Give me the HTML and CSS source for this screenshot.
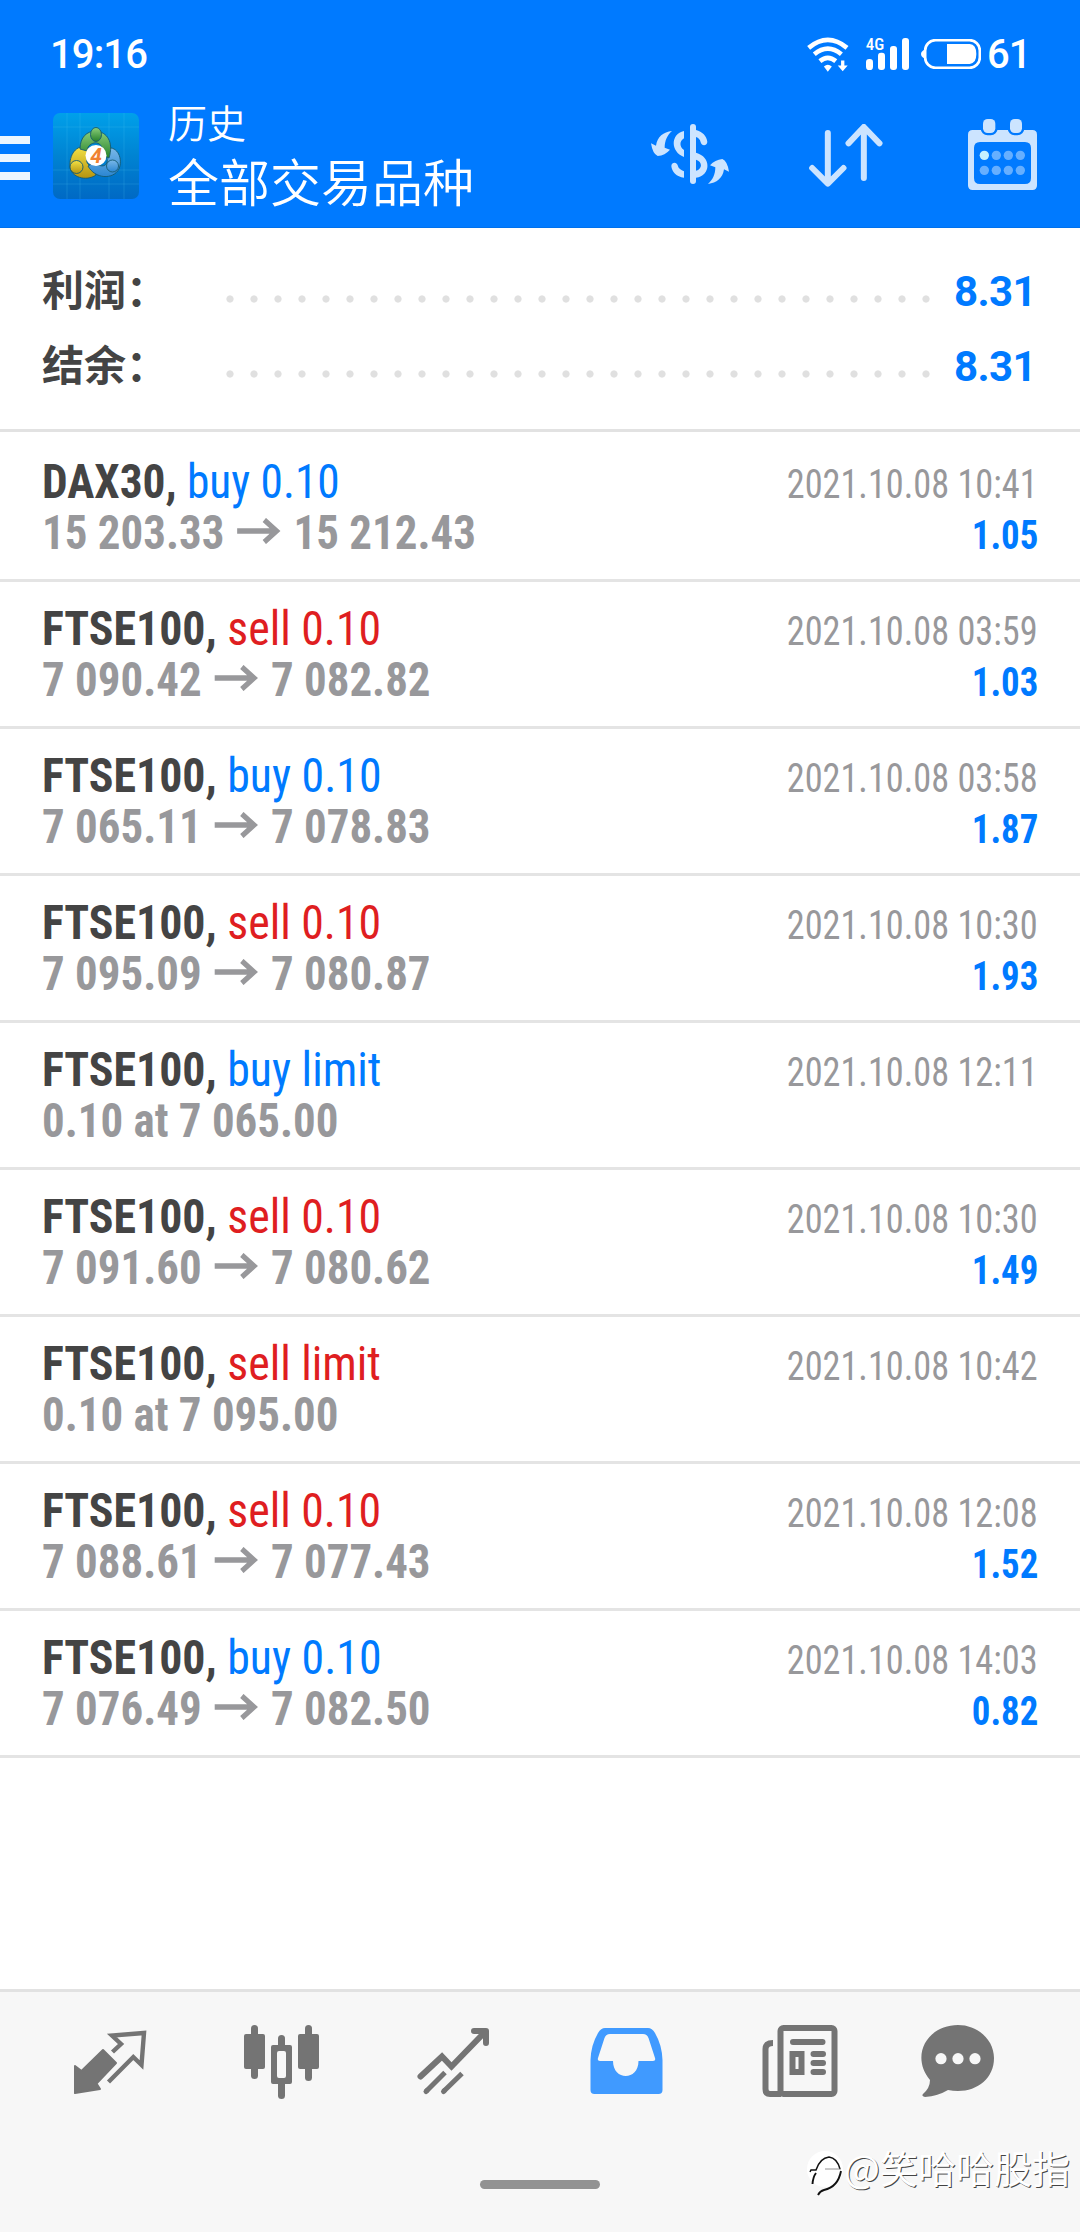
FILE: index.html
```html
<!DOCTYPE html>
<html lang="zh-CN">
<head>
<meta charset="utf-8">
<title>历史</title>
<link rel="stylesheet" href="styles.css">
</head>
<body>
<header class="header">
  <div class="status">
    <span class="clock">19:16</span>
    <div class="status-icons">
      <svg class="wifi" viewBox="558 110 127 104">
        <g fill="none" stroke="#fff" stroke-width="14"><path d="M563 142Q621 94 679 142"/><path d="M580 161Q621 127 662 161"/><path d="M597 182Q621 162 645 182"/></g>
        <path fill="#fff" d="M609 198Q621 188 633 198L621 214Z"/>
        <path fill="#fff" d="M661 180h10v15h10l-15 18-15-18h10z"/>
      </svg>
      <svg class="signal" viewBox="735 111 129 99">
        <g fill="#fff"><rect x="735" y="177" width="21" height="33" rx="10"/><rect x="771" y="158" width="21" height="52" rx="9"/><rect x="807" y="138" width="21" height="72" rx="9"/><rect x="843" y="114" width="21" height="96" rx="9"/></g>
        <text class="net" x="734" y="150">4G</text>
      </svg>
      <svg class="battery" viewBox="900 117 180 90">
        <rect x="912.500" y="120.500" width="164" height="83" rx="31" fill="none" stroke="#fff" stroke-width="8"/>
        <path fill="#fff" d="M910 149Q900 154 900 162Q900 170 910 175Z"/>
        <path fill="#fff" d="M978 132H1046Q1066 134 1066 162Q1066 190 1046 192H978Z"/>
      </svg>
      <span class="percent">61</span>
    </div>
  </div>
  <div class="bar">
    <div class="menu"><i></i><i></i><i></i></div>
    <svg class="logo" viewBox="0 0 86 86">
      <defs>
        <linearGradient id="bg" x1="0" y1="0" x2="0" y2="1"><stop offset="0" stop-color="#00a0ea"/><stop offset=".5" stop-color="#0083d2"/><stop offset="1" stop-color="#0069c4"/></linearGradient>
        <linearGradient id="gr" x1="0" y1="0" x2="0" y2="1"><stop offset="0" stop-color="#8ccf7b"/><stop offset="1" stop-color="#26812b"/></linearGradient>
        <linearGradient id="ye" x1="0" y1="0" x2="0" y2="1"><stop offset="0" stop-color="#f3e145"/><stop offset="1" stop-color="#b59410"/></linearGradient>
        <linearGradient id="bl" x1="0" y1="0" x2="0" y2="1"><stop offset="0" stop-color="#7ab8e8"/><stop offset="1" stop-color="#2b86d2"/></linearGradient>
      </defs>
      <rect width="86" height="86" rx="7" fill="url(#bg)"/>
      <path d="M0 14H86M0 57H86M0 71H86M14 0V86M27 0V86M56 0V86M71 0V86" stroke="#55c8f0" stroke-opacity=".2"/>
      <g stroke="#155a70" stroke-width=".9">
        <path fill="url(#ye)" d="M35 34C23 31 16 42 17 54C18 64 33 69 43 62L40 53C34 53 31 47 37 41Z"/>
        <path fill="url(#bl)" d="M54 35C65 33 70 46 66 56C60 67 42 66 35 53L42 49C48 56 56 53 54 45Z"/>
        <path fill="url(#gr)" d="M27 36C27 24 34 18 43 18C54 19 61 29 56 45L48 42C51 34 47 29 41 30C37 31 34 34 34 38Z"/>
        <ellipse cx="43" cy="21.500" rx="5.500" ry="7" fill="url(#gr)"/>
        <circle cx="23.500" cy="54" r="6.500" fill="url(#ye)"/>
        <circle cx="59.500" cy="53" r="6" fill="url(#bl)"/>
      </g>
      <circle cx="43" cy="42.500" r="10.500" fill="#fff"/>
      <text class="four" x="43" y="49.500" text-anchor="middle">4</text>
    </svg>
    <div class="titles"><div class="title">历史</div><div class="subtitle">全部交易品种</div></div>
    <svg class="currency" viewBox="93 372 234 180" fill="#cce4ff">
      <path d="M156 393C130 396 112 410 108 437L93 430Q98 462 113 468Q135 466 150 449L134 443C134 422 142 405 156 393Z"/>
      <path d="M264 552C290 549 308 535 312 508L327 515Q322 483 307 477Q285 479 270 496L286 502C286 523 278 540 264 552Z"/>
      <rect x="210" y="372" width="18" height="180" rx="9"/>
      <path d="M192 393C151 402 151 455 192 471V450C178 441 178 423 192 415ZM192 533C170 531 155 515 154 498C155 486 170 485 173 496C175 506 183 511 192 514ZM228 390C247 395 260 408 262 426C260 439 245 439 242 427C240 418 236 414 228 411ZM228 458C274 470 274 526 228 533V512C248 507 248 485 228 479Z"/>
    </svg>
    <svg class="sort" viewBox="568 372 221 189" fill="none" stroke="#cce4ff" stroke-width="18" stroke-linecap="round" stroke-linejoin="round">
      <path d="M624 399V549M577 504L624 551L671 504M732 534V383M686 430L732 381L779 430"/>
    </svg>
    <svg class="calendar" viewBox="1044 357 207 213">
      <path fill="#cce4ff" fill-rule="evenodd" d="M1058 390H1237Q1251 390 1251 404V556Q1251 570 1237 570H1058Q1044 570 1044 556V404Q1044 390 1058 390ZM1080 426Q1062 426 1062 444V534Q1062 552 1080 552H1215Q1233 552 1233 534V444Q1233 426 1215 426Z"/>
      <g fill="#cce4ff" stroke="#007aff" stroke-width="14" paint-order="stroke"><rect x="1089" y="357" width="37" height="42" rx="14"/><rect x="1170" y="357" width="36" height="42" rx="14"/></g>
      <g fill="#66afff"><circle cx="1093" cy="466" r="14" fill="#c4f0ff"/><circle cx="1129" cy="466" r="14"/><circle cx="1165" cy="466" r="14"/><circle cx="1201" cy="466" r="14"/><circle cx="1093" cy="511" r="14"/><circle cx="1129" cy="511" r="14"/><circle cx="1165" cy="511" r="14"/><circle cx="1201" cy="511" r="14"/></g>
    </svg>
  </div>
</header>

<section class="summary">
  <div class="sum-row"><span class="sum-label">利润：</span><span class="dots"></span><span class="sum-value">8.31</span></div>
  <div class="sum-row"><span class="sum-label">结余：</span><span class="dots"></span><span class="sum-value">8.31</span></div>
</section>

<main class="list">
  <article class="deal"><div class="line"><span class="name"><b>DAX30,</b> <span class="buy">buy 0.10</span></span><time>2021.10.08 10:41</time></div><div class="line price"><span class="range">15 203.33<svg class="arrow" viewBox="0 0 46 26"><path d="M0 13H42M29 2L42 13L29 24"/></svg>15 212.43</span><span class="profit">1.05</span></div></article>
  <article class="deal"><div class="line"><span class="name"><b>FTSE100,</b> <span class="sell">sell 0.10</span></span><time>2021.10.08 03:59</time></div><div class="line price"><span class="range">7 090.42<svg class="arrow" viewBox="0 0 46 26"><path d="M0 13H42M29 2L42 13L29 24"/></svg>7 082.82</span><span class="profit">1.03</span></div></article>
  <article class="deal"><div class="line"><span class="name"><b>FTSE100,</b> <span class="buy">buy 0.10</span></span><time>2021.10.08 03:58</time></div><div class="line price"><span class="range">7 065.11<svg class="arrow" viewBox="0 0 46 26"><path d="M0 13H42M29 2L42 13L29 24"/></svg>7 078.83</span><span class="profit">1.87</span></div></article>
  <article class="deal"><div class="line"><span class="name"><b>FTSE100,</b> <span class="sell">sell 0.10</span></span><time>2021.10.08 10:30</time></div><div class="line price"><span class="range">7 095.09<svg class="arrow" viewBox="0 0 46 26"><path d="M0 13H42M29 2L42 13L29 24"/></svg>7 080.87</span><span class="profit">1.93</span></div></article>
  <article class="deal"><div class="line"><span class="name"><b>FTSE100,</b> <span class="buy">buy limit</span></span><time>2021.10.08 12:11</time></div><div class="line price"><span class="range">0.10 at 7 065.00</span></div></article>
  <article class="deal"><div class="line"><span class="name"><b>FTSE100,</b> <span class="sell">sell 0.10</span></span><time>2021.10.08 10:30</time></div><div class="line price"><span class="range">7 091.60<svg class="arrow" viewBox="0 0 46 26"><path d="M0 13H42M29 2L42 13L29 24"/></svg>7 080.62</span><span class="profit">1.49</span></div></article>
  <article class="deal"><div class="line"><span class="name"><b>FTSE100,</b> <span class="sell">sell limit</span></span><time>2021.10.08 10:42</time></div><div class="line price"><span class="range">0.10 at 7 095.00</span></div></article>
  <article class="deal"><div class="line"><span class="name"><b>FTSE100,</b> <span class="sell">sell 0.10</span></span><time>2021.10.08 12:08</time></div><div class="line price"><span class="range">7 088.61<svg class="arrow" viewBox="0 0 46 26"><path d="M0 13H42M29 2L42 13L29 24"/></svg>7 077.43</span><span class="profit">1.52</span></div></article>
  <article class="deal"><div class="line"><span class="name"><b>FTSE100,</b> <span class="buy">buy 0.10</span></span><time>2021.10.08 14:03</time></div><div class="line price"><span class="range">7 076.49<svg class="arrow" viewBox="0 0 46 26"><path d="M0 13H42M29 2L42 13L29 24"/></svg>7 082.50</span><span class="profit">0.82</span></div></article>
</main>

<footer class="footer">
  <nav class="tabs">
    <svg viewBox="60 42 100 80">
      <path fill="#747474" stroke="#747474" stroke-width="2" stroke-linejoin="round" d="M75 86L81.500 91L103 70L116 83L96.500 103.500L100 109L75 113Z"/>
      <path fill="none" stroke="#747474" stroke-width="4.400" d="M112.500 72L121 64L112 55.500L144 53L141.500 85L133.300 77L108.500 102" stroke-linejoin="miter"/>
    </svg>
    <svg viewBox="232 42 100 80" fill="#747474">
      <rect x="251" y="45" width="7" height="54" rx="3.500"/><rect x="244" y="54" width="21" height="35" rx="2"/>
      <rect x="278" y="55" width="7" height="15" rx="3.500"/><rect x="278" y="99" width="7" height="20" rx="3.500"/><path fill-rule="evenodd" d="M273 65H290Q292 65 292 67V102Q292 104 290 104H273Q271 104 271 102V67Q271 65 273 65ZM279 71Q277 71 277 73V96Q277 98 279 98H284Q286 98 286 96V73Q286 71 284 71Z"/>
      <rect x="305" y="45" width="7" height="56" rx="3.500"/><rect x="298" y="54" width="21" height="35" rx="2"/>
    </svg>
    <svg viewBox="404 42 100 80" fill="none" stroke="#747474" stroke-width="6">
      <path d="M420.500 96.500L442 76.500L451.500 86.500L484 53" stroke-linecap="round" /><path d="M474 51H486V63" stroke-linecap="round" stroke-linejoin="round"/>
      <path d="M445 92.500L426 111.500M462 93.500L443.500 111.500" stroke-width="5"/><path d="M427 110.500L426 111.500M444.500 110.500L443.500 111.500" stroke-width="5" stroke-linecap="round"/>
    </svg>
    <svg viewBox="576 42 100 80">
      <path fill="#409aff" fill-rule="evenodd" d="M605 48H648Q652 48 655 53Q662 65 662.500 80V110Q662.500 114 658.500 114H594.500Q590.500 114 590.500 110V80Q591 65 598 53Q601 48 605 48ZM610 54Q606 54 604.500 58L598 78Q597 81 600 81H613C613 101 638.500 101 638.500 81H653Q656 81 655 78L648.500 58Q647 54 643 54Z"/>
    </svg>
    <svg viewBox="748 42 100 80" fill="none" stroke="#747474" stroke-width="6">
      <rect x="780.500" y="48" width="54" height="66" rx="3"/><path d="M773 63Q765.500 63 765.500 69V109Q765.500 114 770 114H781"/>
      <path d="M793 62H822.500M813.500 74H823M813.500 83H823M813.500 92H823" stroke-linecap="round"/><rect x="792.500" y="74" width="9" height="18"/>
    </svg>
    <svg viewBox="920 42 100 80">
      <path fill="#747474" d="M958 45C978 45 994 60 994 78C994 98 978 111 958 111Q953 111 948 110Q938 116 925 117Q921 116 923 114Q930 108 930 100C910 76 927 45 958 45Z"/>
      <g fill="#f7f7f7"><circle cx="941" cy="78.700" r="5.600"/><circle cx="958" cy="78.700" r="5.600"/><circle cx="975" cy="78.700" r="5.600"/></g>
    </svg>
  </nav>
  <div class="home"></div>
  <div class="watermark">
    <svg viewBox="0 0 38 48"><circle cx="19" cy="20" r="18" fill="#fff"/><path d="M4 23L5 21H10Q14 9 23 8Q31 9 34 20" fill="none" stroke="#111" stroke-width="1.500"/><path d="M19 20H35" stroke="#777" stroke-width=".8"/><path d="M6.500 35Q7 28 10 24M12 46Q14 42 18 41Q32 38 35 22" fill="none" stroke="#111" stroke-width="1.900"/></svg>
    <span>@笑哈哈股指</span>
  </div>
</footer>
</body>
</html>
```
FILE: styles.css
```css
* { box-sizing: border-box; }
body {
  margin: 0;
  width: 1080px;
  height: 2232px;
  display: flex;
  flex-direction: column;
  background: #fff;
  font-family: Roboto, "Noto Sans CJK SC", sans-serif;
  overflow: hidden;
}
svg { display: block; flex: none; }

/* header */
.header { height: 228px; background: #007aff; color: #fff; border-bottom: 1px solid #0071ec; }
.status { height: 100px; padding: 30px 55px 0 50px; display: flex; justify-content: space-between; }
.clock, .percent { padding-top: 1px; font-size: 40px; line-height: 48px; font-weight: 500; letter-spacing: -0.9px; }
.status-icons { display: flex; }
.wifi { width: 42px; height: 35px; margin-top: 7px; }
.signal { width: 43px; height: 33px; margin: 7px 12px 0 17px; overflow: visible; }
.net { font: 500 51px "Roboto Condensed", Roboto, sans-serif; fill: #fff; }
.battery { width: 60px; height: 30px; margin: 9px 6px 0 0; }
.percent { width: 38px; }
.bar { display: flex; align-items: flex-start; }
.menu { width: 30px; margin-top: 36px; display: flex; flex-direction: column; gap: 10px; }
.menu i { height: 8px; background: #edf6ff; }
.logo { width: 86px; height: 86px; margin: 13px 0 0 23px; }
.four { font: italic 700 21px Roboto, sans-serif; fill: #f08232; }
.titles { width: 400px; margin-left: 29px; font-family: "Noto Sans CJK SC", sans-serif; font-weight: 350; white-space: nowrap; }
.title { margin-top: -2px; font-size: 39px; line-height: 46px; }
.subtitle { font-size: 51px; line-height: 60px; margin-top: 6px; }
.currency { width: 78px; height: 60px; margin: 24px 0 0 83px; }
.sort { width: 74px; height: 63px; margin: 24px 0 0 80px; }
.calendar { width: 69px; height: 71px; margin: 19px 0 0 85px; }

/* totals */
.summary { height: 204px; padding: 26px 44px 0 42px; border-bottom: 3px solid #e2e2e2; }
.sum-row { height: 75px; display: flex; align-items: flex-start; font-size: 42px; line-height: 75px; font-weight: 700; }
.sum-label { width: 184px; margin-top: -4px; font-family: "Noto Sans CJK SC", sans-serif; color: #444; }
.dots { width: 720px; height: 8px; margin: 41px 0 0; background: radial-gradient(circle at 4px 4px, #e0e0e0 3.2px, transparent 4px) 0 0 / 24px 8px; }
.sum-value { margin-left: auto; color: #007aff; letter-spacing: -0.6px; }

/* history */
.list { flex: 1; padding-top: 3px; font-family: "Roboto Condensed", Roboto, sans-serif; }
.deal { height: 147px; padding: 21px 42px 0 42px; border-bottom: 3px solid #e4e4e4; }
.line { height: 51px; display: flex; justify-content: space-between; align-items: baseline; font-size: 48px; line-height: 51px; white-space: nowrap; }
.line b { color: #444; }
.name { transform: scaleX(.955); transform-origin: left; }
.deal:first-child .name { transform: scaleX(.945); }
.range { transform: scaleX(.936); transform-origin: left; }
.buy, .profit { color: #007aff; }
.sell { color: #df1e21; }
.line time { font-size: 40px; color: #98989b; transform: scaleX(.907); transform-origin: right; }
.price { font-weight: 700; color: #98989b; }
.profit { font-size: 40px; transform: scaleX(.92); transform-origin: right; }
.arrow { display: inline-block; width: 49px; height: 26px; margin: 0 13px 0 12px; vertical-align: 5px; fill: none; stroke: #98989b; stroke-width: 5.500; }

/* bottom navigation */
.footer { position: relative; height: 243px; background: #f7f7f7; border-top: 3px solid #e2e2e2; }
.tabs { padding: 30px 24px 0; display: grid; grid-template-columns: repeat(6, 1fr); justify-items: center; }
.tabs svg { width: 100px; height: 80px; }
.home { width: 120px; height: 9px; margin: 78px auto 0; border-radius: 5px; background: #929292; }
.watermark { position: absolute; left: 806px; top: 149px; display: flex; align-items: flex-start; }
.watermark svg { width: 38px; height: 48px; margin-top: 8px; }
.watermark span { font: 400 38px/52px "Noto Sans CJK SC", sans-serif; color: #fff; text-shadow: 1px 1px 0 #444; white-space: nowrap; }
```
